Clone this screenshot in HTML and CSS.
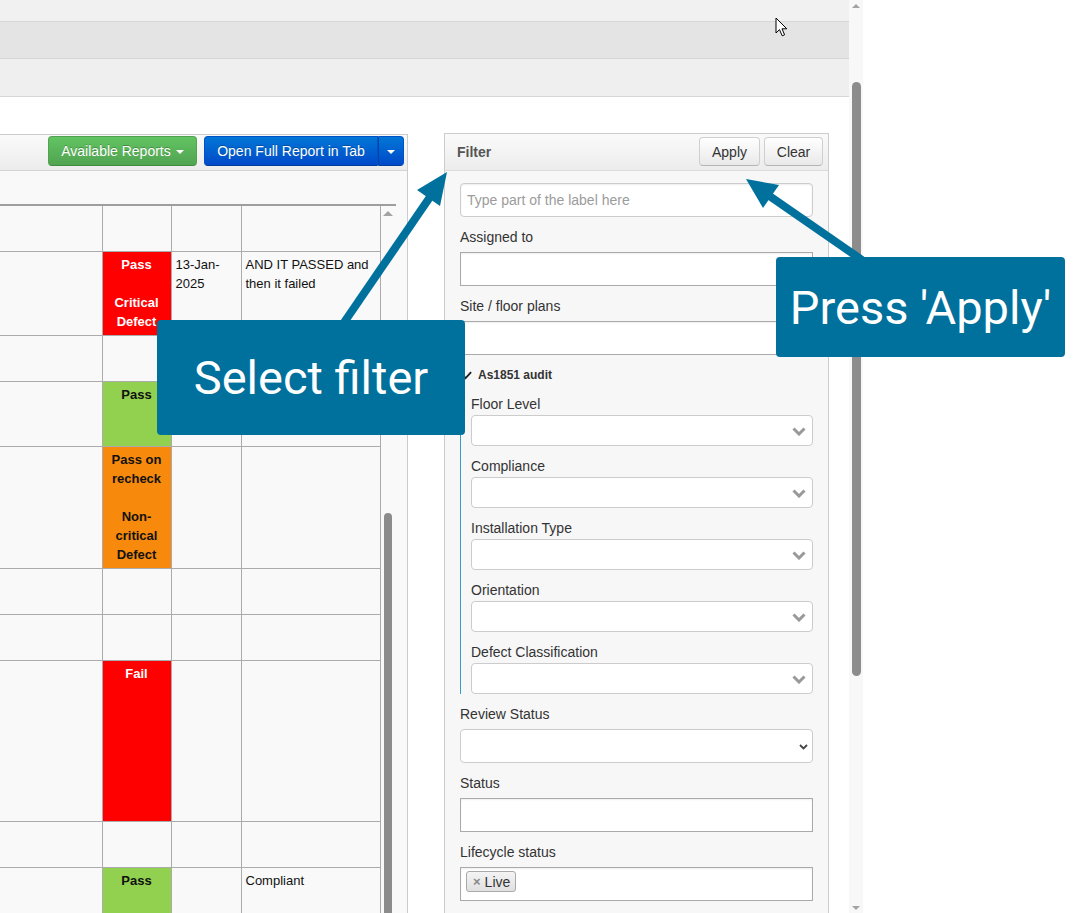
FILE: index.html
```html
<!DOCTYPE html>
<html lang="en">

<head>
    <meta charset="UTF-8">
    <meta name="viewport" content="width=device-width, initial-scale=1.0">
    <title>Inspection report - filter</title>

    <link rel="stylesheet" href="styles.css">
</head>

<body>
    <div class="page">
        <div class="main">
            <div class="band band-top"></div>
            <div class="band band-mid"></div>
            <div class="band band-low"></div>

            <div class="content">
                <section class="report">
                    <div class="report-head">
                        <button class="btn btn-green">Available Reports <span class="caret"></span></button>
                        <div class="btn-group">
                            <button class="btn btn-blue btn-main">Open Full Report in Tab</button>
                            <button class="btn btn-blue btn-split"><span class="caret"></span></button>
                        </div>
                    </div>

                    <div class="report-body">
                        <div class="grid-wrap">
                            <table class="grid">
                                <colgroup>
                                    <col class="col-a">
                                    <col class="col-status">
                                    <col class="col-date">
                                    <col class="col-notes">
                                </colgroup>
                                <tr class="r-head">
                                    <td></td><td></td><td></td><td></td>
                                </tr>
                                <tr class="r84">
                                    <td></td>
                                    <td class="status fail">Pass<br><br>Critical Defect</td>
                                    <td>13-Jan-2025</td>
                                    <td>AND IT PASSED and then it failed</td>
                                </tr>
                                <tr class="r46">
                                    <td></td><td></td><td></td><td></td>
                                </tr>
                                <tr class="r65">
                                    <td></td>
                                    <td class="status pass">Pass</td>
                                    <td></td><td></td>
                                </tr>
                                <tr class="r122">
                                    <td></td>
                                    <td class="status recheck">Pass on recheck<br><br>Non-critical Defect</td>
                                    <td></td><td></td>
                                </tr>
                                <tr class="r46">
                                    <td></td><td></td><td></td><td></td>
                                </tr>
                                <tr class="r46">
                                    <td></td><td></td><td></td><td></td>
                                </tr>
                                <tr class="r161">
                                    <td></td>
                                    <td class="status fail">Fail</td>
                                    <td></td><td></td>
                                </tr>
                                <tr class="r46">
                                    <td></td><td></td><td></td><td></td>
                                </tr>
                                <tr class="r46">
                                    <td></td>
                                    <td class="status pass">Pass</td>
                                    <td></td>
                                    <td>Compliant</td>
                                </tr>
                            </table>
                            <div class="grid-scroll">
                                <span class="tri-up"></span>
                                <span class="grid-thumb"></span>
                            </div>
                        </div>
                    </div>
                </section>

                <aside class="filter">
                    <div class="filter-head">
                        <span class="filter-title">Filter</span>
                        <button class="btn-light btn-apply">Apply</button>
                        <button class="btn-light btn-clear">Clear</button>
                    </div>

                    <div class="filter-body">
                        <input class="text-input search" placeholder="Type part of the label here">

                        <div class="field">
                            <label>Assigned to</label>
                            <input class="text-input">
                        </div>
                        <div class="field">
                            <label>Site / floor plans</label>
                            <input class="text-input">
                        </div>

                        <div class="group-title">
                            <svg class="check" width="10" height="9" viewBox="0 0 10 9"><path d="M0.2 5.6 L2 4 L3.6 5.7 L8.4 0.4 L9.8 1.8 L3.6 8.6 Z" fill="#222"/></svg>
                            As1851 audit
                        </div>
                        <div class="group">
                            <div class="field">
                                <label>Floor Level</label>
                                <div class="select2"><svg width="14" height="9" viewBox="0 0 14 9"><polyline points="1.5,1.5 7,7 12.5,1.5" fill="none" stroke="#999" stroke-width="3"/></svg></div>
                            </div>
                            <div class="field">
                                <label>Compliance</label>
                                <div class="select2"><svg width="14" height="9" viewBox="0 0 14 9"><polyline points="1.5,1.5 7,7 12.5,1.5" fill="none" stroke="#999" stroke-width="3"/></svg></div>
                            </div>
                            <div class="field">
                                <label>Installation Type</label>
                                <div class="select2"><svg width="14" height="9" viewBox="0 0 14 9"><polyline points="1.5,1.5 7,7 12.5,1.5" fill="none" stroke="#999" stroke-width="3"/></svg></div>
                            </div>
                            <div class="field">
                                <label>Orientation</label>
                                <div class="select2"><svg width="14" height="9" viewBox="0 0 14 9"><polyline points="1.5,1.5 7,7 12.5,1.5" fill="none" stroke="#999" stroke-width="3"/></svg></div>
                            </div>
                            <div class="field">
                                <label>Defect Classification</label>
                                <div class="select2"><svg width="14" height="9" viewBox="0 0 14 9"><polyline points="1.5,1.5 7,7 12.5,1.5" fill="none" stroke="#999" stroke-width="3"/></svg></div>
                            </div>
                        </div>

                        <div class="field">
                            <label>Review Status</label>
                            <div class="native-select"><svg width="9" height="6" viewBox="0 0 9 6"><polyline points="1,1 4.5,4.5 8,1" fill="none" stroke="#444" stroke-width="1.8"/></svg></div>
                        </div>
                        <div class="field">
                            <label>Status</label>
                            <input class="text-input">
                        </div>
                        <div class="field">
                            <label>Lifecycle status</label>
                            <div class="text-input tag-input">
                                <span class="tag"><span class="tag-x">×</span>Live</span>
                            </div>
                        </div>
                    </div>
                </aside>
            </div>
        </div>

        <div class="page-scroll">
            <span class="tri-up"></span>
            <span class="page-thumb"></span>
            <span class="tri-down"></span>
        </div>

        <svg class="arrows" width="1086" height="913" viewBox="0 0 1086 913">
            <line x1="343" y1="324" x2="430" y2="197" stroke="#00719c" stroke-width="8"/>
            <polygon points="447,172 440,206 417,190" fill="#00719c"/>
            <line x1="862" y1="260" x2="768" y2="195" stroke="#00719c" stroke-width="8"/>
            <polygon points="746,179 763,208 779,185" fill="#00719c"/>
        </svg>

        <div class="callout callout-select">Select filter</div>
        <div class="callout callout-apply">Press 'Apply'</div>

        <svg class="cursor" width="14" height="21" viewBox="0 0 14 21">
            <path d="M1 1 L1 16 L4.5 12.6 L7.2 18.8 L9.6 17.8 L7 11.8 L11.8 11.8 Z" fill="#fff" stroke="#000" stroke-width="1" stroke-linejoin="round"/>
        </svg>
    </div>
</body>

</html>
```

FILE: styles.css
```css
:root {
    --callout: #00719c;
    --cell-border: #ababab;
    --panel-border: #cccccc;
}

* {
    margin: 0;
    padding: 0;
    box-sizing: border-box;
}

body {
    background-color: #fff;
    font-family: "Liberation Sans", Arial, sans-serif;
    font-size: 14px;
    color: #333;
}

.page {
    position: relative;
    display: flex;
    width: 1086px;
    height: 913px;
    overflow: hidden;
}

.main {
    flex: none;
    width: 849px;
}

/* top bars */

.band {
    border-bottom: 1px solid #d6d6d6;
}

.band-top {
    height: 22px;
    background-color: #f1f1f1;
}

.band-mid {
    height: 37px;
    background-color: #e4e4e4;
}

.band-low {
    height: 38px;
    background-color: #efefef;
}

.content {
    display: flex;
    align-items: flex-start;
    padding-top: 36px;
}

/* report panel */

.report {
    flex: none;
    width: 408px;
    height: 800px;
    margin-top: 1px;
    border-top: 1px solid var(--panel-border);
    border-right: 1px solid var(--panel-border);
    background-color: #f9f9f9;
}

.report-head {
    display: flex;
    justify-content: flex-end;
    gap: 7px;
    height: 36px;
    padding: 1px 3px 0 0;
    background: linear-gradient(#fafafa, #ececec);
    border-bottom: 1px solid #d4d4d4;
}

.btn {
    display: flex;
    align-items: center;
    justify-content: center;
    height: 30px;
    border: 1px solid;
    border-radius: 4px;
    font-family: "Liberation Sans", Arial, sans-serif;
    font-size: 14px;
    color: #fff;
    text-shadow: 0 -1px 0 rgba(0, 0, 0, 0.25);
}

.btn-green {
    width: 149px;
    background: linear-gradient(#62c462, #51a351);
    border-color: #51a351 #51a351 #3d8b3d;
}

.btn-group {
    display: flex;
}

.btn-blue {
    background: linear-gradient(#0077d6, #0049c9);
    border-color: #0050c8 #0050c8 #003c99;
}

.btn-main {
    width: 174px;
    border-radius: 4px 0 0 4px;
}

.btn-split {
    width: 26px;
    border-radius: 0 4px 4px 0;
    border-left-color: #0043a8;
}

.caret {
    display: inline-block;
    margin-left: 5px;
    margin-top: 2px;
    border-top: 4px solid #fff;
    border-left: 4px solid transparent;
    border-right: 4px solid transparent;
}

.btn-split .caret {
    margin-left: 0;
}

.report-body {
    padding-top: 33px;
}

.grid-wrap {
    display: flex;
    align-items: flex-start;
    width: 396px;
    border-top: 2px solid #9e9e9e;
}

.grid {
    flex: none;
    width: 380px;
    table-layout: fixed;
    border-collapse: collapse;
    font-size: 13px;
    line-height: 19px;
    color: #111;
}

.col-a {
    width: 102px;
}

.col-status {
    width: 69px;
}

.col-date {
    width: 70px;
}

.col-notes {
    width: 139px;
}

.grid td {
    border: 1px solid var(--cell-border);
    padding: 3px 4px;
    vertical-align: top;
}

.grid tr:first-child td {
    border-top: none;
}

.grid td:first-child {
    border-left: none;
}

.r-head td {
    height: 45px;
}

.r46 td {
    height: 46px;
}

.r65 td {
    height: 65px;
}

.r84 td {
    height: 84px;
}

.r122 td {
    height: 122px;
}

.r161 td {
    height: 161px;
}

.status {
    text-align: center;
    font-weight: bold;
}

.status.fail {
    background-color: #ff0000;
    color: #fff;
}

.status.pass {
    background-color: #92d050;
}

.status.recheck {
    background-color: #f78a0c;
}

.grid-scroll {
    display: flex;
    flex-direction: column;
    width: 16px;
}

.tri-up {
    display: block;
    width: 0;
    margin: 5px auto 0;
    border-bottom: 5px solid #a3a3a3;
    border-left: 5px solid transparent;
    border-right: 5px solid transparent;
}

.tri-down {
    display: block;
    width: 0;
    margin: auto auto 3px;
    border-top: 5px solid #a3a3a3;
    border-left: 5px solid transparent;
    border-right: 5px solid transparent;
}

.grid-thumb {
    display: block;
    width: 8px;
    height: 500px;
    margin: 297px 0 0 3px;
    background-color: #8c8c8c;
    border-radius: 4px;
}

/* filter panel */

.filter {
    flex: none;
    width: 385px;
    height: 820px;
    margin-left: 36px;
    border: 1px solid var(--panel-border);
    background-color: #f7f7f7;
}

.filter-head {
    display: flex;
    align-items: flex-start;
    gap: 4px;
    height: 37px;
    padding: 3px 5px 0 12px;
    background: linear-gradient(#fafafa, #ececec);
    border-bottom: 1px solid #dcdcdc;
}

.filter-title {
    margin-right: auto;
    line-height: 30px;
    font-weight: bold;
    color: #555;
}

.btn-light {
    height: 29px;
    border: 1px solid #cfcfcf;
    border-bottom-color: #b5b5b5;
    border-radius: 4px;
    background: linear-gradient(#ffffff, #e9e9e9);
    font-family: "Liberation Sans", Arial, sans-serif;
    font-size: 14px;
    color: #333;
}

.btn-apply {
    width: 61px;
}

.btn-clear {
    width: 59px;
}

.filter-body {
    padding: 12px 15px 0;
}

.text-input {
    display: block;
    width: 100%;
    height: 34px;
    border: 1px solid #aaa;
    background-color: #fff;
    box-shadow: inset 0 1px 2px rgba(0, 0, 0, 0.07);
    font-family: "Liberation Sans", Arial, sans-serif;
    font-size: 14px;
    outline: none;
}

.search {
    padding: 0 6px;
    border-color: #ccc;
    border-radius: 4px;
}

.search::placeholder {
    color: #9c9c9c;
}

.field {
    margin-top: 10px;
}

.field label {
    display: block;
    line-height: 20px;
    margin-bottom: 5px;
}

.group-title {
    display: flex;
    align-items: center;
    gap: 6px;
    height: 18px;
    margin-top: 11px;
    padding-left: 2px;
    font-size: 12px;
    font-weight: bold;
    color: #333;
}

.group {
    padding: 10px 0 0 10px;
    border-left: 1px solid #3b9bc6;
}

.group .field:first-child {
    margin-top: 0;
}

.group .field label {
    margin-bottom: 1px;
}

.select2 {
    display: flex;
    align-items: center;
    justify-content: flex-end;
    height: 31px;
    padding: 2px 6px 0 0;
    border: 1px solid #ccc;
    border-radius: 4px;
    background-color: #fff;
}

.native-select {
    display: flex;
    align-items: center;
    justify-content: flex-end;
    height: 34px;
    padding: 1px 4px 0 0;
    border: 1px solid #ccc;
    border-radius: 4px;
    background-color: #fff;
}

.tag-input {
    padding: 3px 5px;
}

.tag {
    display: inline-flex;
    align-items: center;
    height: 21px;
    padding: 0 5px 0 6px;
    border: 1px solid #aaa;
    border-radius: 3px;
    background: linear-gradient(#f4f4f4, #e0e0e0);
    color: #333;
}

.tag-x {
    margin-right: 4px;
    font-size: 13px;
    font-weight: bold;
    color: #888;
}

/* page scrollbar */

.page-scroll {
    display: flex;
    flex-direction: column;
    flex: none;
    width: 14px;
    background-color: #f8f8f8;
}

.page-scroll .tri-up {
    margin-top: 4px;
    border-bottom-width: 4px;
    border-left-width: 4px;
    border-right-width: 4px;
}

.page-scroll .tri-down {
    border-top-width: 4px;
    border-left-width: 4px;
    border-right-width: 4px;
}

.page-thumb {
    display: block;
    width: 9px;
    height: 594px;
    margin: 74px auto 0;
    background-color: #8c8c8c;
    border-radius: 5px;
}

/* callouts */

.arrows {
    position: absolute;
    left: 0;
    top: 0;
    pointer-events: none;
}

.callout {
    position: absolute;
    display: flex;
    align-items: center;
    justify-content: center;
    background-color: var(--callout);
    border-radius: 4px;
    color: #fff;
    font-family: Roboto, "Noto Sans", sans-serif;
    font-size: 47px;
}

.callout-select {
    left: 157px;
    top: 320px;
    width: 308px;
    height: 115px;
}

.callout-apply {
    left: 776px;
    top: 257px;
    width: 289px;
    height: 100px;
}

.cursor {
    position: absolute;
    left: 775px;
    top: 17px;
}
```
